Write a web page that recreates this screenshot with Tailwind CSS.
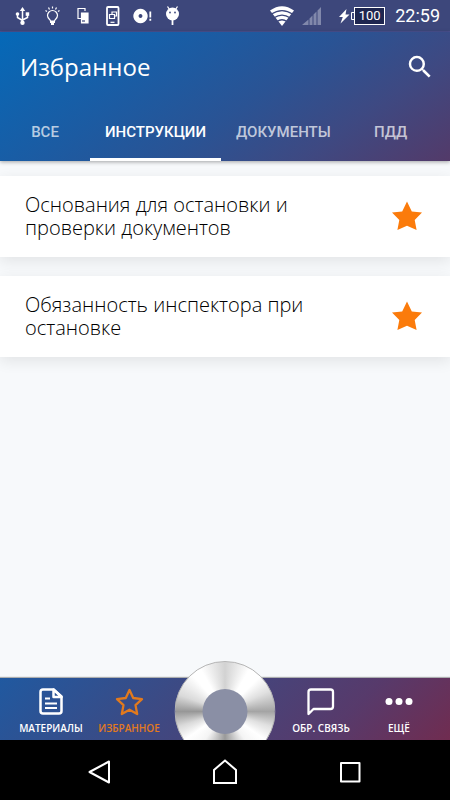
<!DOCTYPE html>
<html lang="ru">
<head>
<meta charset="utf-8">
<meta name="viewport" content="width=device-width, initial-scale=1">
<title>Избранное</title>
<script src="https://cdn.jsdelivr.net/npm/@tailwindcss/browser@4"></script>
</head>
<body class="flex min-h-screen flex-col bg-[#f7f9fb] font-['Open_Sans','Noto_Sans',sans-serif]">

<!-- System status bar -->
<div class="flex h-8 items-center justify-between border-b border-[#4a5190] bg-[#3d477b] pr-2.5 pl-3 font-[Roboto,sans-serif] text-white">
  <div class="flex items-center gap-2.5">
    <svg class="size-5" viewBox="0 0 20 20" fill="none" stroke="currentColor" stroke-width="1.5" aria-hidden="true"><path d="M10.500 4v13M5.500 8v3.500l5 3M15.500 8v3.500l-5 2.500"/><path d="M7.800 5l2.700-4 2.700 4z" fill="currentColor" stroke="none"/><circle cx="5.500" cy="8" r="1.800" fill="currentColor" stroke="none"/><path d="M13.700 6.300h3.500v3.500h-3.500z" fill="currentColor" stroke="none"/><circle cx="10.500" cy="16.800" r="2.200" fill="currentColor" stroke="none"/></svg>
    <svg class="size-5" viewBox="0 0 20 20" fill="none" stroke="currentColor" stroke-width="1.200" aria-hidden="true"><path d="M8.500 15c0-1.500-3-2.500-3-5.500a5 5 0 0 1 10 0c0 3-3 4-3 5.500z"/><path d="M8 16h5M9 18h3" stroke-width="1.800"/><path d="M10.500.500v2M6.500 1.500l1 2M14.500 1.500l-1 2M3.500 4.500l1.500 1M17.500 4.500l-1.500 1"/></svg>
    <svg class="size-5" viewBox="0 0 20 20" fill="none" stroke="currentColor" stroke-width="1.200" aria-hidden="true"><path d="M9 12.500H6V2.500h7V5"/><path d="M9.500 7H16v10H9.500z" fill="currentColor"/><path d="M10 15h3" stroke="#3d477b"/></svg>
    <svg class="size-5" viewBox="0 0 20 20" fill="none" stroke="currentColor" aria-hidden="true"><rect x="5" y="1" width="11.500" height="18" rx="1" stroke-width="1.800"/><path d="M10 8V6h4.500v4H13M7.500 8.500h5v4h-5z" stroke-width="1.200"/><path d="M8.500 16.300h4" stroke-width="1.200"/></svg>
    <svg class="size-5" viewBox="0 0 20 20" aria-hidden="true"><path fill="currentColor" fill-rule="evenodd" d="M8.500 2.800a7.200 7.200 0 1 0 .01 0zM8.500 8.100a1.900 1.900 0 1 1-.01 0z"/><path d="M18.300 5.500v6M18.300 12.800v2" stroke="currentColor" stroke-width="1.800"/></svg>
    <svg class="size-5" viewBox="0 0 20 20" fill="none" stroke="currentColor" aria-hidden="true"><circle cx="10.500" cy="8" r="6.500" fill="currentColor" stroke="none"/><path d="M5.500.500l2 3M15.500.500l-2 3" stroke-width="1.300"/><path d="M10.500 13v6" stroke-width="1.800"/><circle cx="8" cy="6.500" r=".9" fill="#3d477b" stroke="none"/><circle cx="13" cy="6.500" r=".9" fill="#3d477b" stroke="none"/></svg>
  </div>
  <div class="flex items-center">
    <svg class="mr-2 h-5 w-6" viewBox="0 0 24 20" aria-hidden="true"><path fill="currentColor" d="M12 20L0 4.500Q12-4 24 4.500z"/><path d="M1 8.300q11-7.500 22 0M4 11.800q8-5.500 16 0M7 15.500q5-3.500 10 0" fill="none" stroke="#3d477b" stroke-width="1.300"/></svg>
    <svg class="mr-4 h-5 w-5" viewBox="0 0 20 20" fill="#8188ab" aria-hidden="true"><path d="M19 1v18h-3.500V4.500zM14.500 5.500V19h-3V8.500zM10.500 9.500V19h-3v-6.500zM6.500 13.500V19H0z"/></svg>
    <svg class="h-4 w-3" viewBox="0 0 12 16" aria-hidden="true"><path fill="currentColor" d="M8.500 1L1 9h3.800L2.500 15.500 11.500 6.500H7.500z"/></svg>
    <svg class="h-[18px] w-1" viewBox="0 0 4 18" fill="none" stroke="currentColor" aria-hidden="true"><path d="M4 5.500H1.500v7H4"/></svg>
    <span class="mr-2.5 flex h-[18px] w-[31px] items-center justify-center border border-white bg-[#1e2650] text-[13px]">100</span>
    <span class="text-[18px]">22:59</span>
  </div>
</div>

<header class="z-10 bg-linear-[145deg,#0569b8_0%,#1c5ba2_35%,#2a5394_55%,#3e4982_76%,#533a69_100%] text-white shadow-[0_1px_4px_rgba(0,0,0,0.35)]">
  <div class="flex h-[71px] items-center justify-between pr-[15px] pb-0.5 pl-5">
    <h1 class="text-[24px] leading-8">Избранное</h1>
    <button type="button" aria-label="Поиск">
      <svg class="size-[30px]" viewBox="0 0 24 24" fill="currentColor" aria-hidden="true"><path d="M15.500 14h-.79l-.28-.27A6.471 6.471 0 0 0 16 9.500 6.500 6.500 0 1 0 9.500 16c1.610 0 3.090-.59 4.230-1.570l.27.28v.79l5 4.990L20.490 19l-4.990-5zm-6 0C7.010 14 5 11.990 5 9.500S7.010 5 9.500 5 14 7.010 14 9.500 11.990 14 9.500 14z"/></svg>
    </button>
  </div>
  <nav class="flex h-[58px] font-[Roboto,sans-serif] text-[15px] font-medium text-white/70" aria-label="Разделы">
    <a href="#all" class="flex min-w-[90px] items-center justify-center border-b-3 border-transparent px-[15px] pt-1">ВСЕ</a>
    <a href="#instructions" aria-current="page" class="flex min-w-[90px] items-center justify-center border-b-3 border-white px-[15px] pt-1 text-white">ИНСТРУКЦИИ</a>
    <a href="#documents" class="flex min-w-[90px] items-center justify-center border-b-3 border-transparent px-[15px] pt-1">ДОКУМЕНТЫ</a>
    <a href="#pdd" class="flex min-w-[90px] items-center justify-center border-b-3 border-transparent px-[15px] pt-1">ПДД</a>
  </nav>
</header>

<main class="flex flex-1 flex-col gap-[19px] pt-[15px]">
  <article class="flex items-center justify-between bg-white pt-[17px] pb-[18px] pr-7 pl-[25px] shadow-[0_4px_14px_rgba(0,0,0,0.09)]">
    <a href="#stop" class="max-w-[290px] text-[20px] leading-[23px] font-light text-black">Основания для остановки и проверки документов</a>
    <button type="button" aria-label="Убрать из избранного" class="text-[#fb7b0b]">
      <svg class="size-[30px]" viewBox="0 0 30 30" fill="currentColor" aria-hidden="true"><path d="M15 0.500l4.800 9.900L30 11.400l-7.300 7.700 1.900 10L15 24.800l-9.600 4.300 1.900-10L0 11.400l10.200-1z"/></svg>
    </button>
  </article>
  <article class="flex items-center justify-between bg-white pt-[17px] pb-[18px] pr-7 pl-[25px] shadow-[0_4px_14px_rgba(0,0,0,0.09)]">
    <a href="#duty" class="max-w-[290px] text-[20px] leading-[23px] font-light text-black">Обязанность инспектора при остановке</a>
    <button type="button" aria-label="Убрать из избранного" class="text-[#fb7b0b]">
      <svg class="size-[30px]" viewBox="0 0 30 30" fill="currentColor" aria-hidden="true"><path d="M15 0.500l4.800 9.900L30 11.400l-7.300 7.700 1.900 10L15 24.800l-9.600 4.300 1.900-10L0 11.400l10.200-1z"/></svg>
    </button>
  </article>
</main>

<!-- App navigation with the round centre button -->
<nav class="relative flex h-[62px] bg-linear-[135deg,#2059a0_0%,#3c4a84_36%,#573a6b_75%,#702c50_100%] px-3 text-[10px] leading-4 font-semibold text-white shadow-[0_-1px_1px_rgba(0,0,0,0.3)]" aria-label="Меню">
  <a href="#materials" class="flex w-[78px] flex-col items-center gap-0.5 pt-2">
    <svg class="size-8" viewBox="0 0 32 32" fill="none" stroke="currentColor" stroke-width="2.500" stroke-linejoin="round" aria-hidden="true"><path d="M18.500 3.500H8A2.500 2.500 0 0 0 5.500 6v19A2.500 2.500 0 0 0 8 27.500h16a2.500 2.500 0 0 0 2.500-2.500V10.500z"/><path d="M18.500 3.500v7.500h8z"/><path d="M10 12.500h5M10 17.500h12M10 22h12" stroke-width="2"/></svg>
    МАТЕРИАЛЫ
  </a>
  <a href="#favorites" aria-current="page" class="flex w-[78px] flex-col items-center gap-0.5 pt-2 text-[#e27a1d]">
    <svg class="size-8" viewBox="0 0 32 32" fill="none" stroke="currentColor" stroke-width="2.300" stroke-linejoin="round" aria-hidden="true"><path d="M16.500 4l3.700 8 8.800 1.100-6.500 6 1.700 8.900-7.700-4.300L8.800 28l1.700-8.900-6.500-6 8.800-1.100z"/></svg>
    ИЗБРАННОЕ
  </a>
  <div class="flex-1"></div>
  <a href="#feedback" class="flex w-[78px] flex-col items-center gap-0.5 pt-2">
    <svg class="size-8" viewBox="0 0 32 32" fill="none" stroke="currentColor" stroke-width="2.300" stroke-linejoin="round" aria-hidden="true"><path d="M3.500 28V6A2.500 2.500 0 0 1 6 3.500h19.500A2.500 2.500 0 0 1 28 6v14.500a2.500 2.500 0 0 1-2.500 2.500H8.500z"/></svg>
    ОБР. СВЯЗЬ
  </a>
  <a href="#more" class="flex w-[78px] flex-col items-center gap-0.5 pt-2">
    <svg class="size-8" viewBox="0 0 32 32" fill="currentColor" aria-hidden="true"><circle cx="6" cy="15.500" r="3.500"/><circle cx="16" cy="15.500" r="3.500"/><circle cx="26" cy="15.500" r="3.500"/></svg>
    ЕЩЁ
  </a>
  <div class="absolute bottom-0 left-1/2 h-[79px] w-[101px] -translate-x-1/2 overflow-hidden">
    <button type="button" aria-label="Запись" class="flex size-[101px] items-center justify-center rounded-full border border-[#b4b4b4] bg-[conic-gradient(#d2d2d2_0deg,#fff_30deg,#fff_45deg,#e0e0e0_65deg,#a4a4a4_90deg,#e0e0e0_108deg,#fff_125deg,#f4f4f4_145deg,#999_180deg,#f4f4f4_215deg,#fff_235deg,#dadada_252deg,#979797_270deg,#dadada_290deg,#fff_318deg,#fff_330deg,#d2d2d2_360deg)]">
      <span class="size-[45px] rounded-full bg-[#8a8fa5]"></span>
    </button>
  </div>
</nav>

<!-- System navigation -->
<div class="z-10 flex h-[60px] items-center justify-center gap-[93px] bg-black text-white">
  <button type="button" aria-label="Назад"><svg class="size-8" viewBox="0 0 32 32" fill="none" stroke="currentColor" stroke-width="2" stroke-linejoin="round" aria-hidden="true"><path d="M5.500 18L25 7.500v21z"/></svg></button>
  <button type="button" aria-label="Домой"><svg class="size-8" viewBox="0 0 32 32" fill="none" stroke="currentColor" stroke-width="2" aria-hidden="true"><path d="M5 29V16L16 6.500 27 16v13z"/></svg></button>
  <button type="button" aria-label="Недавние"><svg class="size-8" viewBox="0 0 32 32" fill="none" stroke="currentColor" stroke-width="2" stroke-linejoin="round" aria-hidden="true"><path d="M7 9h18.500v18.500H7z"/></svg></button>
</div>
</body>
</html>
